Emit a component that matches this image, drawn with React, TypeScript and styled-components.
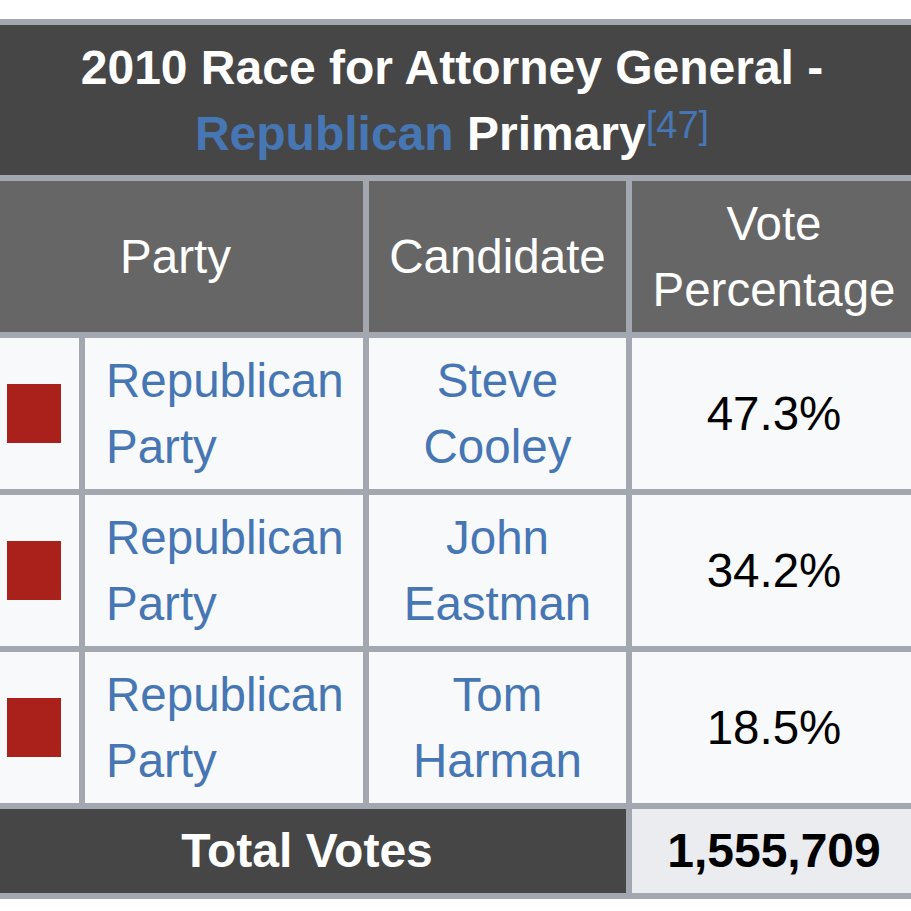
import React from "react";
import styled, { createGlobalStyle } from "styled-components";

const GlobalStyle = createGlobalStyle`
  html, body {
    margin: 0;
    padding: 0;
    background: #ffffff;
    overflow: hidden;
  }
  body {
    font-family: "Liberation Sans", Arial, Helvetica, sans-serif;
  }
`;

/* The screenshot shows the table slightly cropped on both sides. */
const Page = styled.div`
  padding-top: 19px;
  width: 911px;
  overflow: hidden;
`;

const Table = styled.div`
  display: grid;
  grid-template-columns: 91px 278px 257px 1fr;
  gap: 6px;
  padding: 6px 0;
  margin: 0 -5px 0 -12px;
  background: #a3a8b0;
  font-size: 47.5px;
  line-height: 66px;
`;

const Caption = styled.div`
  grid-column: 1 / -1;
  background: #464646;
  color: #ffffff;
  font-weight: 700;
  font-size: 48px;
  text-align: center;
  padding: 10px 0 8px;
`;

const Link = styled.span`
  color: #4676b4;
`;

const Ref = styled.sup`
  font-size: 38px;
  font-weight: 400;
  line-height: 0;
  color: #4676b4;
  vertical-align: 12px;
`;

const HeadCell = styled.div<{ $span?: number }>`
  grid-column: span ${(p) => p.$span ?? 1};
  background: #666666;
  color: #ffffff;
  display: flex;
  align-items: center;
  justify-content: center;
  text-align: center;
  padding: 9.5px 8px;
`;

const SwatchCell = styled.div`
  background: #f8f9fa;
  display: flex;
  align-items: center;
  justify-content: center;
`;

const Swatch = styled.div`
  width: 54px;
  height: 59px;
  background: #a9211a;
`;

const Cell = styled.div<{ $align?: "left" | "center" }>`
  background: #f8f9fa;
  color: #000000;
  display: flex;
  align-items: center;
  justify-content: ${(p) => (p.$align === "left" ? "flex-start" : "center")};
  text-align: ${(p) => p.$align ?? "center"};
  padding: ${(p) => (p.$align === "left" ? "9.5px 4px 9.5px 21px" : "9.5px 8px")};
`;

const TotalLabel = styled.div`
  grid-column: span 3;
  background: #464646;
  color: #ffffff;
  font-weight: 700;
  font-size: 48px;
  text-align: center;
  padding: 9px 0;
`;

const TotalValue = styled.div`
  background: #eaecf0;
  color: #000000;
  font-weight: 700;
  font-size: 48px;
  text-align: center;
  padding: 9px 0;
`;

const rows = [
  { first: "Steve", last: "Cooley", pct: "47.3%" },
  { first: "John", last: "Eastman", pct: "34.2%" },
  { first: "Tom", last: "Harman", pct: "18.5%" },
];

export default function App() {
  return (
    <Page>
      <GlobalStyle />
      <Table>
        <Caption>
          2010 Race for Attorney General -
          <br />
          <Link>Republican</Link> Primary<Ref>[47]</Ref>
        </Caption>
        <HeadCell $span={2}>Party</HeadCell>
        <HeadCell>Candidate</HeadCell>
        <HeadCell>
          Vote
          <br />
          Percentage
        </HeadCell>
        {rows.map((r) => (
          <React.Fragment key={r.last}>
            <SwatchCell>
              <Swatch />
            </SwatchCell>
            <Cell $align="left">
              <Link>
                Republican
                <br />
                Party
              </Link>
            </Cell>
            <Cell>
              <Link>
                {r.first}
                <br />
                {r.last}
              </Link>
            </Cell>
            <Cell>{r.pct}</Cell>
          </React.Fragment>
        ))}
        <TotalLabel>Total Votes</TotalLabel>
        <TotalValue>1,555,709</TotalValue>
      </Table>
    </Page>
  );
}
